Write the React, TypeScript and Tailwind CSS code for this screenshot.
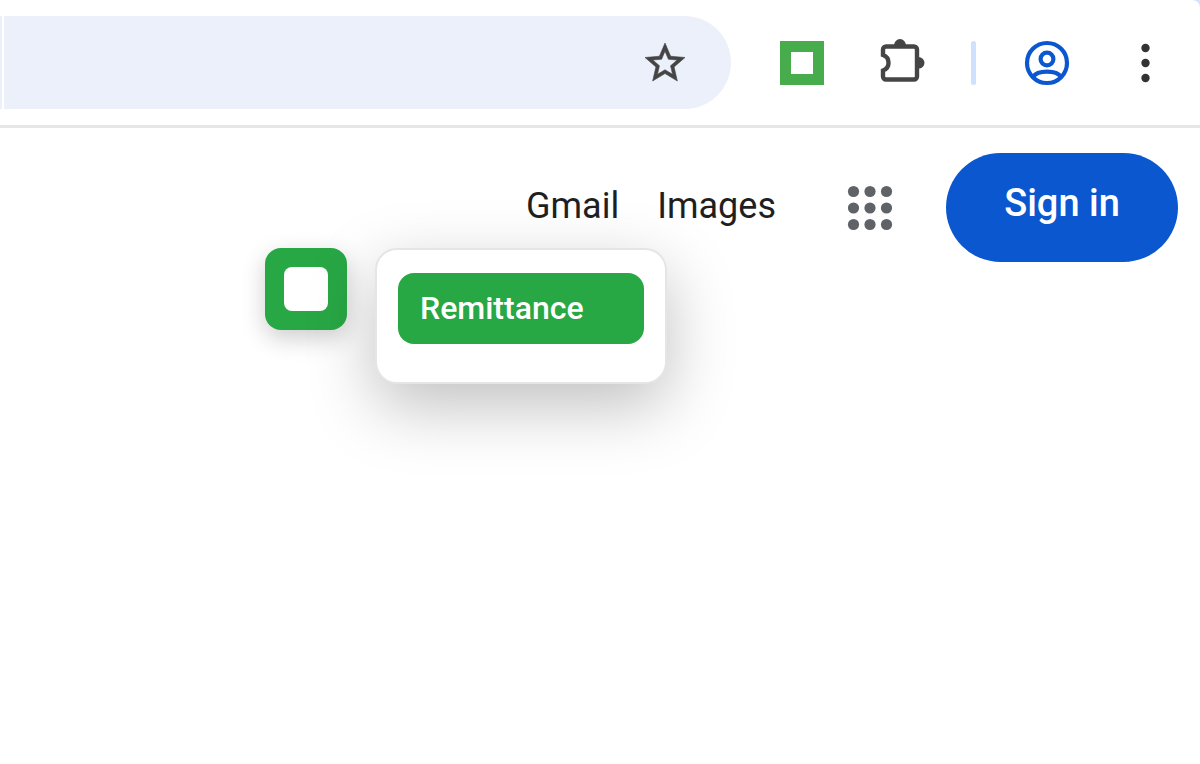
import type {ReactNode} from 'react';

export default function App() {
  return (
    <div className="relative min-h-screen overflow-hidden bg-white font-['Roboto',sans-serif]">
      <BrowserToolbar />
      <RemittanceWidget />
      <PageNav />
    </div>
  );
}

function BrowserToolbar() {
  return (
    <header className="bg-[#d5e4fc]">
      <div className="flex items-center rounded-tr-lg border-b-3 border-[#e6e6e6] bg-white pt-4 pr-[50px] pb-4">
        <div className="flex min-w-0 flex-1 items-center gap-0.5">
          <div className="h-[93px] w-0.5 bg-[#ebf0fa]" />
          <div className="flex h-[93px] min-w-0 flex-1 items-center rounded-r-full bg-[#ebf0fa] pr-[42px]">
            <input
              aria-label="Address bar"
              className="min-w-0 flex-1 bg-transparent pl-4 text-4xl outline-none"
              type="text"
            />
            <IconButton label="Bookmark this tab">
              <StarIcon />
            </IconButton>
          </div>
        </div>

        <div className="flex items-center pl-[49px]">
          <IconButton label="Remittance extension">
            <span className="flex size-11 items-center justify-center bg-[#47ac4b]">
              <span className="size-[22px] bg-white" />
            </span>
          </IconButton>
          <div className="ml-14 flex">
            <IconButton label="Extensions">
              <PuzzleIcon />
            </IconButton>
          </div>
          <div className="ml-[45px] h-11 w-[5px] rounded-sm bg-[#d0e1fd]" />
          <div className="ml-12 flex">
            <IconButton label="Profile">
              <ProfileIcon />
            </IconButton>
          </div>
          <div className="ml-[71px] flex">
            <IconButton label="Menu">
              <MenuDotsIcon />
            </IconButton>
          </div>
        </div>
      </div>
    </header>
  );
}

function PageNav() {
  return (
    <nav className="relative flex items-center justify-end pt-[25px] pr-[22px] text-[36px] leading-9 text-[#1f1f1f]">
      <a className="mr-[38px] pb-1" href="#gmail">
        Gmail
      </a>
      <a className="mr-[71px] pb-1" href="#images">
        Images
      </a>
      <div className="mr-[53px] flex">
        <IconButton label="Google apps">
          <AppsIcon />
        </IconButton>
      </div>
      <a
        className="flex h-[109px] w-[232px] justify-center rounded-full bg-[#0b57d0] pt-8 text-[38px] font-medium text-white"
        href="#signin"
      >
        Sign in
      </a>
    </nav>
  );
}

// Floating extension widget, drawn over whatever page is open
function RemittanceWidget() {
  return (
    <div className="absolute top-[248px] left-[265px] flex items-start gap-7">
      <button
        aria-label="Toggle remittance menu"
        className="flex size-[82px] items-center justify-center rounded-2xl bg-[#28a745] shadow-[0_8px_24px_rgba(0,0,0,0.2)]"
        type="button"
      >
        <span className="size-11 rounded-lg bg-white" />
      </button>
      <div className="relative w-[292px] rounded-[22px] border-2 border-[#e5e5e5] bg-white px-[21px] pt-[23px] pb-[38px] shadow-[0_22px_66px_rgba(0,0,0,0.25)]">
        <button
          className="flex h-[71px] w-full items-center rounded-2xl bg-[#28a745] px-[22px] pb-0.5 text-[32px] leading-9 font-medium text-white"
          type="button"
        >
          Remittance
        </button>
      </div>
    </div>
  );
}

function IconButton({label, children}: {label: string; children: ReactNode}) {
  return (
    <button aria-label={label} className="flex shrink-0 items-center justify-center" type="button">
      {children}
    </button>
  );
}

function StarIcon() {
  return (
    <svg className="size-12" fill="#444444" stroke="#444444" strokeWidth="0.3" viewBox="0 0 24 24">
      <path d="M22 9.24l-7.19-.62L12 2 9.19 8.63 2 9.24l5.46 4.73L5.82 21 12 17.27 18.18 21l-1.63-7.03L22 9.24zM12 15.4l-3.76 2.27 1-4.28-3.32-2.88 4.38-.38L12 6.1l1.71 4.04 4.38.38-3.32 2.88 1 4.28L12 15.4z" />
    </svg>
  );
}

function PuzzleIcon() {
  return (
    <svg className="h-[50px] w-[46px]" fill="none" viewBox="0 0 46 50">
      <path
        d="M6 8.5H34a3 3 0 0 1 3 3V38.5a3 3 0 0 1-3 3H6a3 3 0 0 1-3-3V32.5A8.2 8.2 0 0 0 3 17V11.5a3 3 0 0 1 3-3Z"
        stroke="#454545"
        strokeWidth="4.4"
      />
      <path d="M14 7.5a6 6.5 0 0 1 12 0ZM38.5 19a6 5.8 0 0 1 0 11.6Z" fill="#454545" />
    </svg>
  );
}

function ProfileIcon() {
  return (
    <svg className="size-[46px]" fill="none" stroke="#0b57d0" strokeWidth="4.2" viewBox="0 0 46 46">
      <circle cx="23" cy="23" r="20" />
      <circle cx="23" cy="19" r="6.4" />
      <path d="M9 37C13.5 29.8 32.5 29.8 37 37" />
    </svg>
  );
}

function MenuDotsIcon() {
  return (
    <svg className="h-10 w-[9px]" fill="#333333" viewBox="0 0 9 40">
      <circle cx="4.5" cy="5" r="4.2" />
      <circle cx="4.5" cy="20" r="4.2" />
      <circle cx="4.5" cy="35" r="4.2" />
    </svg>
  );
}

function AppsIcon() {
  const steps = [6.5, 23, 39.5];

  return (
    <svg className="size-[46px]" fill="#5f6368" viewBox="0 0 46 46">
      {steps.map((y) => steps.map((x) => <circle key={`${x}-${y}`} cx={x} cy={y} r="5.6" />))}
    </svg>
  );
}
